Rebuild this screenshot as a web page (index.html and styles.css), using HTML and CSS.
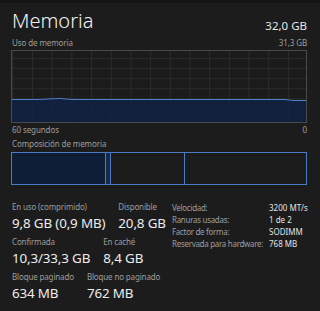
FILE: index.html
```html
<!DOCTYPE html>
<html lang="es">
<head>
    <meta charset="UTF-8" />
    <meta name="viewport" content="width=device-width, initial-scale=1.0" />
    <title>Memoria</title>
    <link rel="stylesheet" href="styles.css">
</head>
<body>
    <div class="topbar"></div>
    <div class="panel">
        <div class="header">
            <h1>Memoria</h1>
            <span class="total">32,0 GB</span>
        </div>

        <div class="row-labels">
            <span>Uso de memoria</span>
            <span>31,3 GB</span>
        </div>
        <div class="graph">
            <svg viewBox="0 0 294 71" preserveAspectRatio="none">
                <path class="area" d="M0 48.5 L26 48.5 L36 48 L48 47.5 L60 48.5 L272 48.5 L282 49.5 L294 49.5 L294 71 L0 71 Z" />
                <path class="line" d="M0 48.5 L26 48.5 L36 48 L48 47.5 L60 48.5 L272 48.5 L282 49.5 L294 49.5" />
            </svg>
        </div>
        <div class="row-labels">
            <span>60 segundos</span>
            <span>0</span>
        </div>

        <div class="comp-label">Composición de memoria</div>
        <div class="composition">
            <div class="seg in-use"></div>
            <div class="seg modified"></div>
            <div class="seg standby"></div>
            <div class="seg free"></div>
        </div>

        <div class="stats">
            <div class="main-stats">
                <div class="stat-row">
                    <div class="stat">
                        <div class="stat-label">En uso (comprimido)</div>
                        <div class="stat-value">9,8 GB (0,9 MB)</div>
                    </div>
                    <div class="stat">
                        <div class="stat-label">Disponible</div>
                        <div class="stat-value">20,8 GB</div>
                    </div>
                </div>
                <div class="stat-row">
                    <div class="stat">
                        <div class="stat-label">Confirmada</div>
                        <div class="stat-value">10,3/33,3 GB</div>
                    </div>
                    <div class="stat">
                        <div class="stat-label">En caché</div>
                        <div class="stat-value">8,4 GB</div>
                    </div>
                </div>
                <div class="stat-row">
                    <div class="stat">
                        <div class="stat-label">Bloque paginado</div>
                        <div class="stat-value">634 MB</div>
                    </div>
                    <div class="stat">
                        <div class="stat-label">Bloque no paginado</div>
                        <div class="stat-value">762 MB</div>
                    </div>
                </div>
            </div>

            <div class="details">
                <span class="key">Velocidad:</span><span class="val">3200 MT/s</span>
                <span class="key">Ranuras usadas:</span><span class="val">1 de 2</span>
                <span class="key">Factor de forma:</span><span class="val">SODIMM</span>
                <span class="key">Reservada para hardware:</span><span class="val">768 MB</span>
            </div>
        </div>
    </div>
</body>
</html>
```

FILE: styles.css
```css
html, body {
    margin: 0;
    padding: 0;
}

body {
    background: #1c1c1c;
    color: #ececec;
    font-family: 'Noto Sans', 'Open Sans', sans-serif;
    width: 320px;
    height: 311px;
    overflow: hidden;
    white-space: nowrap;
}

.topbar {
    height: 3px;
    background: #141414;
}

.panel {
    padding: 0 13px 0 11px;
}

.header {
    display: flex;
    justify-content: space-between;
    align-items: flex-end;
    height: 33px;
    padding-left: 1px;
}

h1 {
    margin: 0;
    font-size: 20px;
    font-weight: 300;
    line-height: 30px;
    color: #f2f2f2;
}

.total {
    font-size: 11.5px;
    line-height: 20px;
    color: #e6e6e6;
}

.row-labels {
    display: flex;
    justify-content: space-between;
    font-size: 8px;
    line-height: 14px;
    color: #9c9c9c;
    padding-left: 1px;
    letter-spacing: -0.1px;
}

.graph {
    height: 71px;
    border: 1px solid #4a4a4a;
    background-color: #1b1b1b;
    background-image:
        linear-gradient(to right, #2b2b2b 1px, transparent 1px),
        linear-gradient(to bottom, #2b2b2b 1px, transparent 1px);
    background-size: 19.7px 100%, 100% 10.1px;
    background-position: 20px 0, 0 7px;
}

.graph svg {
    display: block;
    width: 100%;
    height: 100%;
}

.area {
    fill: #0d2147;
    fill-opacity: 0.78;
}

.line {
    fill: none;
    stroke: #4f7fc6;
    stroke-width: 1;
}

.comp-label {
    font-size: 8px;
    line-height: 14px;
    color: #9c9c9c;
    padding-left: 1px;
    letter-spacing: -0.1px;
}

.composition {
    display: flex;
    height: 33px;
    margin-top: 1px;
}

.seg {
    border: 1px solid #4a7bc4;
    box-sizing: border-box;
    height: 100%;
}

.in-use {
    width: 95px;
    background: #0f1e37;
}

.modified {
    width: 5px;
    border-left: none;
    background: #182a48;
}

.standby {
    width: 74px;
    border-left: none;
}

.free {
    flex: 1;
    border-left: none;
}

.stats {
    display: flex;
    align-items: flex-start;
    margin-top: 16px;
    padding-left: 1px;
}

.main-stats {
    flex: none;
    width: 160px;
}

.stat-row {
    display: flex;
    gap: 13px;
    margin-bottom: 3px;
}

.stat-label {
    font-size: 8px;
    line-height: 12px;
    color: #9c9c9c;
    letter-spacing: -0.15px;
}

.stat-value {
    font-size: 13.4px;
    line-height: 20px;
    color: #ececec;
    letter-spacing: -0.15px;
}

.details {
    display: grid;
    grid-template-columns: 97px auto;
    font-size: 8px;
    line-height: 12px;
    margin-top: 1px;
}

.key {
    color: #9c9c9c;
    letter-spacing: -0.3px;
}

.val {
    color: #e2e2e2;
}
```
